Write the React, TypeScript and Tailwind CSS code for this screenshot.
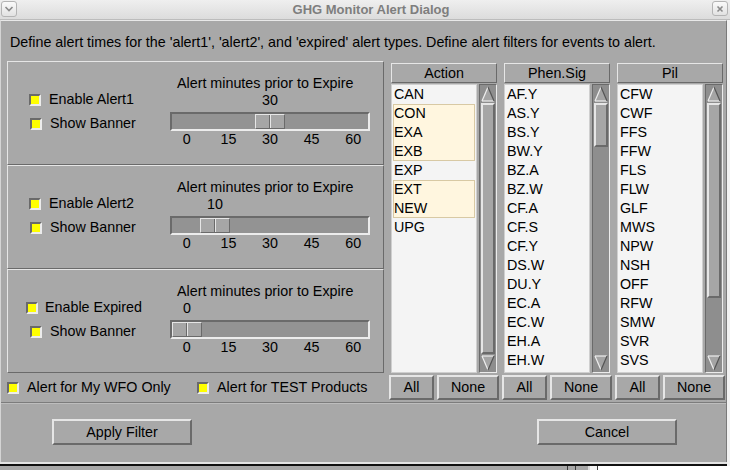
import React from 'react';

const FONT = "font-['Liberation_Sans',Arial,Helvetica,sans-serif]";

const RAISED =
  'border-t-[#e6e6e6] border-l-[#e6e6e6] border-b-[#6a6a6a] border-r-[#6a6a6a]';
const SUNKEN =
  'border-t-[#6a6a6a] border-l-[#6a6a6a] border-b-[#ececec] border-r-[#ececec]';

interface Column {
  title: string;
  items: string[];
  selected: string[];
  thumbHeight: number | null;
}

const columns: Column[] = [
  {
    title: 'Action',
    items: ['CAN', 'CON', 'EXA', 'EXB', 'EXP', 'EXT', 'NEW', 'UPG'],
    selected: ['CON', 'EXA', 'EXB', 'EXT', 'NEW'],
    thumbHeight: null,
  },
  {
    title: 'Phen.Sig',
    items: [
      'AF.Y', 'AS.Y', 'BS.Y', 'BW.Y', 'BZ.A', 'BZ.W', 'CF.A', 'CF.S',
      'CF.Y', 'DS.W', 'DU.Y', 'EC.A', 'EC.W', 'EH.A', 'EH.W',
    ],
    selected: [],
    thumbHeight: 44,
  },
  {
    title: 'Pil',
    items: [
      'CFW', 'CWF', 'FFS', 'FFW', 'FLS', 'FLW', 'GLF', 'MWS',
      'NPW', 'NSH', 'OFF', 'RFW', 'SMW', 'SVR', 'SVS',
    ],
    selected: [],
    thumbHeight: 195,
  },
];

function Check() {
  return (
    <span
      className={`block w-[12px] h-[12px] shrink-0 border-2 ${SUNKEN} bg-[#ffff00]`}
    />
  );
}

function Slider({ value }: { value: number }) {
  // thumb travel: 166px over 0..60 minutes
  const offset = Math.round((value / 60) * 166);
  return (
    <div className="flex flex-col w-[200px]">
      <div className="h-[17px] leading-[17px] pl-[7px] whitespace-nowrap">
        Alert minutes prior to Expire
      </div>
      <div className="h-[17px] leading-[17px] flex">
        <span className="w-[30px] text-center" style={{ marginLeft: offset + 2 }}>
          {value}
        </span>
      </div>
      <div className={`mt-[3px] h-[19px] w-[200px] border-2 ${SUNKEN} bg-[#939393] flex`}>
        <div
          className={`w-[30px] h-full flex border ${RAISED} bg-[#a6a6a6]`}
          style={{ marginLeft: offset }}
        >
          <div className="flex-1 border-r border-r-[#6a6a6a]" />
          <div className="flex-1 border-l border-l-[#e6e6e6]" />
        </div>
      </div>
      <div className="grid grid-cols-5 w-[208px] ml-[-4px] h-[17px] leading-[17px] text-center">
        <span>0</span>
        <span>15</span>
        <span>30</span>
        <span>45</span>
        <span>60</span>
      </div>
    </div>
  );
}

function AlertSection({
  label,
  value,
  firstPad,
  firstGap,
}: {
  label: string;
  value: number;
  firstPad: string;
  firstGap: string;
}) {
  return (
    <div className={`h-[104px] border ${RAISED} flex`}>
      <div className="w-[162px] flex flex-col pt-[26px]">
        <div className={`h-[24px] flex items-center ${firstPad} ${firstGap}`}>
          <Check />
          <span>{label}</span>
        </div>
        <div className="h-[24px] flex items-center pl-[22px] gap-[8px]">
          <Check />
          <span>Show Banner</span>
        </div>
      </div>
      <div className="pt-[13px]">
        <Slider value={value} />
      </div>
    </div>
  );
}

function Arrow({ down }: { down?: boolean }) {
  return (
    <svg width="14" height="16" viewBox="0 0 14 16" className="block shrink-0">
      {down ? (
        <>
          <polygon points="1,1 13,1 7,15" fill="#a4a4a4" />
          <line x1="1" y1="1" x2="13" y2="1" stroke="#eeeeee" strokeWidth="1.2" />
          <line x1="1" y1="1" x2="7" y2="15" stroke="#eeeeee" strokeWidth="1.2" />
          <line x1="13" y1="1" x2="7" y2="15" stroke="#555555" strokeWidth="1.2" />
        </>
      ) : (
        <>
          <polygon points="7,1 1,15 13,15" fill="#a4a4a4" />
          <line x1="7" y1="1" x2="1" y2="15" stroke="#eeeeee" strokeWidth="1.2" />
          <line x1="1" y1="15" x2="13" y2="15" stroke="#eeeeee" strokeWidth="1.2" />
          <line x1="7" y1="1" x2="13" y2="15" stroke="#555555" strokeWidth="1.2" />
        </>
      )}
    </svg>
  );
}

function ListColumn({ col }: { col: Column }) {
  // group consecutive selected rows into one outlined block
  const groups: { sel: boolean; rows: string[] }[] = [];
  col.items.forEach((it) => {
    const sel = col.selected.includes(it);
    const last = groups[groups.length - 1];
    if (last && last.sel && sel) last.rows.push(it);
    else groups.push({ sel, rows: [it] });
  });

  return (
    <div className="w-[110px] flex flex-col pt-[2px]">
      <div
        className={`mx-[2px] h-[20px] border ${RAISED} flex items-center justify-center leading-[17px]`}
      >
        {col.title}
      </div>
      <div className="mx-[2px] mt-[1px] h-[289px] flex gap-[2px]">
        <div className="w-[86px] h-full border border-[#cfcfcf] bg-[#f4f4f4] overflow-hidden">
          {groups.map((g, i) => (
            <div
              key={i}
              className={
                g.sel
                  ? 'mx-[1px] bg-[#fff6df] shadow-[inset_0_0_0_1px_#d8c9a4]'
                  : 'mx-[1px]'
              }
            >
              {g.rows.map((r) => (
                <div key={r} className="h-[19px] leading-[19px] pl-[1px] text-black">
                  {r}
                </div>
              ))}
            </div>
          ))}
        </div>
        <div className={`w-[18px] h-full border ${SUNKEN} bg-[#8e8e8e] p-[1px] flex flex-col`}>
          <Arrow />
          {col.thumbHeight === null ? (
            <div className={`flex-1 my-[1px] border-2 ${RAISED} bg-[#a6a6a6]`} />
          ) : (
            <>
              <div
                className={`mt-[1px] border-2 ${RAISED} bg-[#a6a6a6]`}
                style={{ height: col.thumbHeight }}
              />
              <div className="flex-1" />
            </>
          )}
          <Arrow down />
        </div>
      </div>
      <div className="mt-[2px] h-[25px] flex gap-[3px]">
        <button className={`w-[45px] h-full border-2 ${RAISED} bg-[#a8a8a8] leading-[17px]`}>
          All
        </button>
        <button className={`flex-1 h-full border-2 ${RAISED} bg-[#a8a8a8] leading-[17px]`}>
          None
        </button>
      </div>
    </div>
  );
}

export default function App() {
  return (
    <div className={`w-[730px] h-[470px] overflow-hidden bg-[#f2f2f2] text-[14.3px] text-black ${FONT}`}>
      {/* Title bar */}
      <div className="h-[20px] flex items-start bg-gradient-to-b from-[#efefef] to-[#dcdcdc] border-b border-b-[#bcbcbc]">
        <div className="ml-[1px] mt-[1px] w-[16px] h-[16px] rounded-[3px] border border-[#b4b4b4] bg-gradient-to-b from-[#fafafa] to-[#e2e2e2] flex items-center justify-center">
          <svg width="10" height="8" viewBox="0 0 10 8">
            <path d="M1.5 2 L5 5.5 L8.5 2" fill="none" stroke="#8a8a8a" strokeWidth="1.6" />
          </svg>
        </div>
        <div className="flex-1 pl-[13px] h-[19px] leading-[19px] text-center text-[13px] font-bold text-[#7e7e7e]">
          GHG Monitor Alert Dialog
        </div>
        <div className="mr-[2px] mt-[1px] w-[16px] h-[15px] rounded-[3px] border border-[#b4b4b4] bg-gradient-to-b from-[#fafafa] to-[#e2e2e2] flex items-center justify-center">
          <svg width="8" height="8" viewBox="0 0 8 8">
            <path d="M1.5 1.5 L6.5 6.5 M6.5 1.5 L1.5 6.5" stroke="#8a8a8a" strokeWidth="1.6" />
          </svg>
        </div>
      </div>

      {/* Dialog body */}
      <div className="w-[727px] bg-[#a8a8a8] border-t border-t-[#e8e8e8] border-l border-l-[#d4d4d4] border-r border-r-[#7a7a7a]">
        <div className="h-[40px] pt-[13px] pl-[9px] leading-[17px] whitespace-nowrap">
          Define alert times for the 'alert1', 'alert2', and 'expired' alert types. Define alert
          filters for events to alert.
        </div>

        <div className="h-[341px] flex pl-[6px] gap-[5px]">
          <div className="w-[377px] flex flex-col">
            <AlertSection label="Enable Alert1" value={30} firstPad="pl-[21px]" firstGap="gap-[8px]" />
            <AlertSection label="Enable Alert2" value={10} firstPad="pl-[21px]" firstGap="gap-[8px]" />
            <AlertSection label="Enable Expired" value={0} firstPad="pl-[18px]" firstGap="gap-[7px]" />
            <div className="h-[29px] flex items-center">
              <div className="w-[190px] flex items-center gap-[8px]">
                <Check />
                <span>Alert for My WFO Only</span>
              </div>
              <div className="flex items-center gap-[8px]">
                <Check />
                <span>Alert for TEST Products</span>
              </div>
            </div>
          </div>
          <div className="flex gap-[3px]">
            {columns.map((c) => (
              <ListColumn key={c.title} col={c} />
            ))}
          </div>
        </div>

        <div className="h-[2px] border-t border-t-[#7c7c7c] border-b border-b-[#bdbdbd]" />

        <div className="h-[58px] flex items-start pt-[15px]">
          <button className={`ml-[51px] w-[140px] h-[26px] border-2 ${RAISED} bg-[#a8a8a8] leading-[17px]`}>
            Apply Filter
          </button>
          <button className={`ml-auto mr-[49px] w-[140px] h-[26px] border-2 ${RAISED} bg-[#a8a8a8] leading-[17px]`}>
            Cancel
          </button>
        </div>
      </div>

      {/* Window bottom edge and what lies behind it */}
      <div className="w-[727px] h-[2px] bg-[#e4e4e4]" />
      <div className="w-[727px] h-[2px] bg-[#111111]" />
      <div className="h-[4px] flex">
        <div className="w-[567px] bg-[#a8a8a8]" />
        <div className="w-[1px] bg-[#3c3c3c]" />
        <div className="w-[7px] bg-[#a8a8a8]" />
        <div className="w-[1px] bg-[#3c3c3c]" />
        <div className="w-[12px] bg-[#a8a8a8]" />
        <div className="w-[2px] bg-[#dcdcdc]" />
        <div className="w-[7px] bg-[#f4f4f4]" />
        <div className="w-[1px] bg-[#3c3c3c]" />
        <div className="flex-1 bg-white" />
      </div>
    </div>
  );
}
